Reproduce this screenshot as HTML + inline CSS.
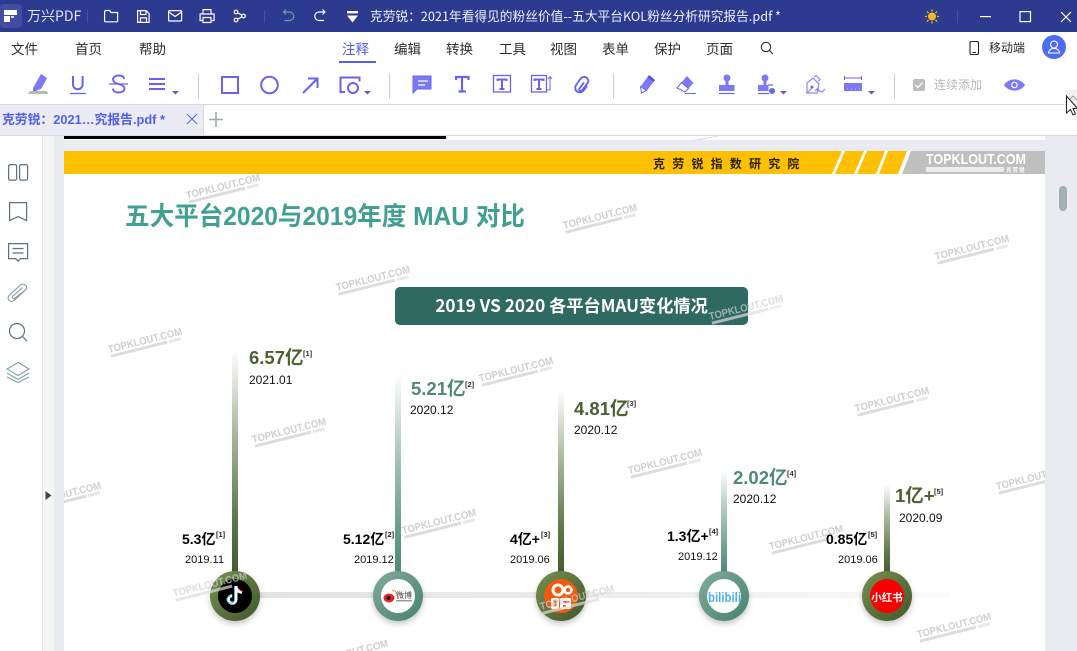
<!DOCTYPE html>
<html lang="zh"><head><meta charset="utf-8"><title>万兴PDF</title>
<style>
html,body{margin:0;padding:0;width:1077px;height:651px;overflow:hidden;background:#fff}
svg{display:block}
text{font-family:"Liberation Sans","Noto Sans CJK SC",sans-serif}
.cj{font-family:"Noto Sans CJK SC","Liberation Sans",sans-serif}
.m{font-size:13.5px;fill:#2b2b2b}
.w{font-size:10.5px;font-weight:700;fill:#cfcfcf}
.b{font-size:18.500px;font-weight:700}
.l{font-size:14px;font-weight:700;fill:#000}
.s{font-size:7.500px;font-weight:700}
.d{font-size:12px;fill:#111}
.e{font-size:11px;fill:#111}
.i{fill:none;stroke:#6a63ee;stroke-width:2}
.f{fill:#7d78f5}
.n{fill:none;stroke:#fff;stroke-width:1.2}
.p{fill:none;stroke:#5b7088;stroke-width:1.2}
</style></head><body>
<svg width="1077" height="651" viewBox="0 0 1077 651" xmlns="http://www.w3.org/2000/svg">
<defs>
<linearGradient id="g1" x1="0" y1="0" x2="0" y2="1"><stop offset="0" stop-color="#fff"/><stop offset=".35" stop-color="#aebba3"/><stop offset=".75" stop-color="#5d7748"/><stop offset="1" stop-color="#445a2c"/></linearGradient>
<linearGradient id="g2" x1="0" y1="0" x2="0" y2="1"><stop offset="0" stop-color="#fff"/><stop offset=".35" stop-color="#b3cdc3"/><stop offset=".75" stop-color="#6a9e8b"/><stop offset="1" stop-color="#4d8a74"/></linearGradient>
<linearGradient id="r1" x1="0" y1="0" x2="1" y2="1"><stop offset="0" stop-color="#759150"/><stop offset="1" stop-color="#43562b"/></linearGradient>
<linearGradient id="r2" x1="0" y1="0" x2="1" y2="1"><stop offset="0" stop-color="#82ab9b"/><stop offset="1" stop-color="#478270"/></linearGradient>
<linearGradient id="tl" x1="0" y1="0" x2="1" y2="0"><stop offset="0" stop-color="#e2e2e2"/><stop offset=".6" stop-color="#eeeeee"/><stop offset="1" stop-color="#fbfbfb"/></linearGradient>
<filter id="sh" x="-30%" y="-30%" width="160%" height="170%"><feDropShadow dx="0" dy="3" stdDeviation="3" flood-color="#000" flood-opacity=".22"/></filter>
<clipPath id="pg"><rect x="64" y="151" width="981" height="500"/></clipPath>
</defs>

<!-- backgrounds -->
<rect x="54" y="136" width="1023" height="515" fill="#e9ebf1"/>
<rect x="0" y="136" width="42" height="515" fill="#fff"/>
<rect x="42" y="136" width="1" height="515" fill="#dfe2e4"/>
<rect x="43" y="136" width="11" height="515" fill="#f4f6f6"/>
<rect x="64" y="136" width="981" height="4" fill="#fff"/>
<rect x="64" y="136" width="382" height="3" fill="#000"/>
<polygon points="692,140 716,136 720,136 700,140" fill="#ddd"/>
<rect x="64" y="151" width="981" height="500" fill="#fff"/>

<!-- title bar -->
<rect width="1077" height="32" fill="#2c3a8f"/>
<rect x="0" y="4" width="22" height="24" rx="4" fill="#404da0"/>
<rect x="4" y="10" width="13" height="5" fill="#fff"/><rect x="4" y="16" width="6" height="6" fill="#fff"/><rect x="11" y="16" width="3" height="2" fill="#d7daf0"/>
<text x="27" y="21" class="cj" font-size="14" fill="#dfe3f5">万兴PDF</text>
<rect x="87" y="10" width="1" height="13" fill="#45529f"/>
<path class="n" d="M104.600 12c0-1 .5-1.500 1.500-1.500h3.500l1.500 2h6.500v8.500a.8.8 0 0 1-.8.8h-11.400a.8.8 0 0 1-.8-.8z"/>
<path class="n" d="M137.600 10.600h8.500l3 3v8.800h-11.500zM140.500 10.600v3.900h5.500v-3.900M140.500 22.400v-4.500h6v4.500"/>
<rect class="n" x="168.600" y="10.600" width="13" height="10.400" rx="1"/><path class="n" d="M168.800 12l6.300 4.500 6.300-4.500"/>
<path class="n" d="M203 14v-4.400h8V14M202.500 20.500h-2.400v-6.500h14v6.500h-2.400"/><rect class="n" x="203" y="17.500" width="8" height="5"/>
<circle class="n" cx="236" cy="12" r="1.800"/><circle class="n" cx="236" cy="20" r="1.800"/><circle class="n" cx="243.500" cy="16" r="1.800"/>
<path class="n" d="M237.700 12.900l4.200 2.300M237.700 19.100l4.200-2.300"/>
<rect x="264" y="10" width="1" height="13" fill="#45529f"/>
<path fill="none" stroke="#6aa3a8" stroke-width="1.200" d="M286 9.500l-2.500 2.500 2.500 2.500M283.500 12h6a4.200 4.200 0 0 1 0 8.500h-5"/>
<path class="n" d="M322.500 9.500l2.500 2.500-2.500 2.500M325 12h-6a4.200 4.200 0 0 0 0 8.500h5"/>
<rect x="347" y="11" width="11" height="2.400" fill="#fff"/><path d="M347 15.500h11l-5.500 7z" fill="#fff"/>
<text x="370" y="21" class="cj" font-size="13" fill="#eef0fa" textLength="411" lengthAdjust="spacingAndGlyphs">克劳锐：2021年看得见的粉丝价值--五大平台KOL粉丝分析研究报告.pdf *</text>
<circle cx="932" cy="16.500" r="4" fill="#f6b81f"/>
<path stroke="#f6b81f" stroke-width="1.300" d="M932 9.500v2M932 21.500v2M925 16.500h2M937 16.500h2M927 11.500l1.500 1.500M935.500 20l1.500 1.500M937 11.500l-1.500 1.500M928.500 20l-1.500 1.500"/>
<rect x="957" y="10" width="1" height="13" fill="#45529f"/>
<rect x="980" y="16" width="11" height="1.200" fill="#fff"/>
<rect class="n" x="1020" y="11.600" width="10.500" height="10"/>
<path class="n" d="M1061 12l10 10M1071 12l-10 10"/>

<!-- menu -->
<text x="11" y="54" class="m">文件</text>
<text x="75" y="54" class="m">首页</text>
<text x="139" y="54" class="m">帮助</text>
<text x="342" y="54" class="m" style="fill:#4f5ff0">注释</text>
<rect x="339" y="61" width="37" height="2" fill="#5160ee"/>
<text x="394" y="54" class="m">编辑</text>
<text x="446" y="54" class="m">转换</text>
<text x="499" y="54" class="m">工具</text>
<text x="550" y="54" class="m">视图</text>
<text x="602" y="54" class="m">表单</text>
<text x="654" y="54" class="m">保护</text>
<text x="706" y="54" class="m">页面</text>
<circle cx="766" cy="47" r="4.700" fill="none" stroke="#333" stroke-width="1.100"/><path d="M769.500 50.500l3.500 3.500" stroke="#333" stroke-width="1.100"/>
<rect x="970" y="41.500" width="8.500" height="13" rx="1.500" fill="none" stroke="#222" stroke-width="1.100"/><path d="M972.500 52.500h3.500" stroke="#222"/>
<text x="989" y="52" font-size="12" fill="#2b2b2b">移动端</text>
<circle cx="1054" cy="47" r="12" fill="#4d6cf6"/>
<circle cx="1054" cy="44.500" r="3.500" fill="none" stroke="#fff" stroke-width="1.100"/>
<path d="M1048.500 53c.5-3.500 2.500-4.500 5.500-4.500s5 1 5.500 4.500z" fill="none" stroke="#fff" stroke-width="1.100"/>

<!-- toolbar -->
<path class="f" d="M41 74l6 4-5.500 10.500-5.500 2.500-3-3z"/><path d="M33 88l3.500 3-3 0z" fill="#5a53e0"/>
<path d="M30 91h17l1 3H28z" fill="#b4bcb0"/>
<path class="i" d="M73 76v8.500a4.800 4.800 0 0 0 9.600 0v-8.500"/><path d="M70 93.500h16" stroke="#6a63ee" stroke-width="1.300"/>
<path class="i" style="stroke-width:1.900" d="M124 79c0-2.500-2.500-3.500-5.500-3.500-3.500 0-5.500 2-5.500 4 0 2 2 3.500 5.500 4.500 3.500 1 6 2.500 6 4.500 0 2.500-2.500 4-6 4-3.500 0-5.500-1.500-5.500-4"/><path d="M109 84h19" stroke="#6a63ee" stroke-width="1.300"/>
<path d="M149 79h16M149 84h16M149 89h16" stroke="#6a63ee" stroke-width="2"/>
<path d="M172 91h7l-3.500 3.500z" fill="#5a5fb5"/>
<rect x="198" y="74" width="1" height="25" fill="#ccd0d6"/>
<rect class="i" x="222" y="77" width="16" height="16"/>
<circle class="i" cx="269.500" cy="85" r="8.300"/>
<path class="i" d="M303 93l14-14M308 78.500h9.500V88"/>
<path class="i" d="M345 92h-4.500v-14.500h19v4"/><circle class="i" cx="353" cy="88" r="5"/>
<path d="M364 91h7l-3.500 3.500z" fill="#5a5fb5"/>
<rect x="389" y="74" width="1" height="25" fill="#ccd0d6"/>
<path class="f" d="M413 76h18v13h-14l-4 4z"/><path d="M413 76h18v13h-14l-4 4z" fill="none" stroke="#6a63ee"/>
<path d="M418 81h10M418 85h7" stroke="#fff" stroke-width="1.200"/>
<path class="i" d="M456 80v-3h12.500v3M462 77v14M458.500 91.500h7.500" style="stroke-width:2.200"/>
<rect x="493.500" y="75.500" width="17" height="16.500" fill="none" stroke="#6a63ee" stroke-width="1.300"/>
<path class="i" d="M497.500 81v-1.500h9V81M502 79.500v9.500M499.500 89h5" style="stroke-width:2"/>
<rect x="531.500" y="75.500" width="15" height="16.500" fill="none" stroke="#6a63ee" stroke-width="1.300"/>
<path class="i" d="M534.500 81v-1.500h9V81M539 79.500v9.500M536.500 89h5" style="stroke-width:2"/>
<path d="M547 90h3v-13M548 79l2-2.500 2 2.500" fill="none" stroke="#6a63ee" stroke-width="1"/>
<path class="i" d="M586 81l-7 9c-1.800 2.300 1.500 3.800 3 2l6-8c2-3-.5-8-4-8.500-1.500-.2-3 .8-4 2l-2 2" style="display:none"/>
<path class="i" style="stroke-width:1.900" d="M584 82.500l-4.500 6c-1.300 2 1.300 3.500 2.800 1.600l5-6.600c2.500-3.500-.8-7.500-4.300-6.500-1 .3-2 1-3 2.500l-3.500 5c-2.500 3.500-1 6.500 1.500 7.500 2 .8 4 .2 5.500-1.500l3.500-4.500"/>
<rect x="613" y="74" width="1" height="25" fill="#ccd0d6"/>
<path class="f" d="M649 75l6 5-8 10.500-6-4.500z"/><path d="M649 75l6 5-1.500 2-6-4.500z" fill="#5a53e0"/>
<path d="M640.500 86.500l6 4-5 2.500z" fill="#fff" stroke="#6a63ee"/>
<path class="f" d="M687 76l6.500 7-5 5.500-7-6z"/><path d="M681.500 82.500l7 6-3.500 3.500-8-4z" fill="#fff" stroke="#6a63ee"/>
<path d="M685 93.500h11" stroke="#6a63ee"/>
<circle cx="727" cy="78" r="3.500" class="f"/><rect x="725.500" y="80" width="3" height="5" class="f"/>
<rect x="719" y="85" width="15.500" height="6" class="f"/><path d="M719 93.500h15.500" stroke="#6a63ee" stroke-width="1.200"/>
<circle cx="765" cy="78" r="3.500" class="f"/><rect x="763.500" y="80" width="3" height="5" class="f"/>
<rect x="758" y="85" width="10.500" height="6" class="f"/><path d="M768 85h5M758 93.500h11" stroke="#6a63ee" stroke-width="1.200"/>
<circle cx="772" cy="91" r="3" fill="#5d6ef0"/>
<path d="M780 91h7l-3.500 3.500z" fill="#5a5fb5"/>
<path fill="none" stroke="#8c88f2" stroke-width="1.200" d="M807 83l6-5 6 6-2 9h-10zM814 77l2-1.500 4 4-1.500 2M807 93l5-5M815 91l3-3 1 3 3 1 3-3"/><circle cx="812" cy="87" r="1.500" fill="#6a63ee"/>
<path d="M844.500 76v4M861.500 76v4M844.500 78h17" stroke="#6a63ee" fill="none"/>
<rect x="844" y="83" width="18" height="8" class="f"/><path d="M847 89h1M851 89h1M855 89h1M859 89h1" stroke="#fff" stroke-opacity=".6"/>
<path d="M868 91h7l-3.500 3.500z" fill="#5a5fb5"/>
<rect x="894" y="74" width="1" height="25" fill="#ccd0d6"/>
<rect x="913" y="79" width="12" height="12" rx="2" fill="#bdbdbd"/><path d="M915.500 85l2.500 2.500 4.500-5" fill="none" stroke="#fff" stroke-width="1.300"/>
<text x="934" y="89" font-size="12" fill="#b7b7b7">连续添加</text>
<path d="M1004 85c5-7.500 16-7.500 21 0-5 7.500-16 7.500-21 0z" fill="#7d78f5"/><circle cx="1014.500" cy="85" r="2.700" fill="none" stroke="#fff" stroke-width="1.200"/>

<!-- tab bar -->
<rect x="1065" y="90" width="12" height="14" fill="#f0f2f2"/>
<path d="M1069 100l4-4 4 4" fill="none" stroke="#8fa8a0" stroke-width="1"/>
<rect x="0" y="104" width="1077" height="1" fill="#d6d6e6"/>
<rect x="0" y="105" width="203" height="30" fill="#ebecf3"/>
<rect x="203" y="105" width="1" height="30" fill="#d6d6e6"/>
<rect x="0" y="135" width="1077" height="1" fill="#d9dae0"/>
<text x="2" y="124" font-size="13" font-weight="700" fill="#4f5ff0" textLength="163" lengthAdjust="spacingAndGlyphs">克劳锐：2021…究报告.pdf *</text>
<path d="M187 114l10 10M197 114l-10 10" stroke="#5a66e8" stroke-width="1" fill="none"/>
<path d="M216 112v15M209 119.500h14" stroke="#9aa9a8" stroke-width="1.600"/>
<path d="M1066.500 96v17l4-3.500 2.500 5.500 2.500-1-2.500-5.500h4.500z" fill="#fff" stroke="#222" stroke-width="1"/>

<!-- sidebar -->
<rect class="p" x="8.600" y="164.600" width="8" height="15.500" rx="1.500"/>
<rect class="p" x="19.600" y="164.600" width="8" height="15.500" rx="1.500"/>
<path class="p" d="M9.600 202.600h17v18l-8.500-4-8.500 4z"/>
<path class="p" d="M8.600 243.600h19v15h-7l-2.500 2.500-2.500-2.500h-7zM12.500 248.500h11M12.500 253h11"/>
<path fill="none" stroke="#7d9aa0" stroke-width="1.100" d="M26 289.500L14 300.500c-3 3-8-1-5-5l11.500-10.500c3-2.500 8 1 5.500 4.500L15 298c-1.500 1.500-3.500-.5-2-2l9.500-8.500"/>
<circle class="p" cx="17" cy="331" r="7.500"/><path d="M22.500 336.500l4.500 4.500" stroke="#5b7088" stroke-width="1.200"/>
<path fill="none" stroke="#7fa2a3" stroke-width="1.100" d="M18 362.500l11 6.500-11 6.500-11-6.500zM7 373l11 6.500L29 373M7 377l11 5.500L29 377"/>
<path d="M45.500 491l6 4.500-6 4.500z" fill="#444"/>
<rect x="1059" y="186" width="8" height="25" rx="4" fill="#a1b0b0"/>

<!-- banner -->
<rect x="64" y="151" width="981" height="23" fill="#fec000"/>
<polygon points="902,174 911,151 1045,151 1045,174" fill="#bfbfbf"/>
<g fill="#fff">
<polygon points="832,174 842,151 845,151 835,174"/>
<polygon points="854,174 864,151 867,151 857,174"/>
<polygon points="876,174 885,151 888,151 879,174"/>
<polygon points="898,174 907,151 911,151 902,174"/>
</g>
<text x="653" y="168" font-size="12" font-weight="700" fill="#2a2206" class="cj" letter-spacing="7.200">克劳锐指数研究院</text>
<text x="926" y="164" font-size="15" font-weight="700" fill="#fff" textLength="100" lengthAdjust="spacingAndGlyphs">TOPKLOUT.COM</text>
<rect x="926" y="167" width="78" height="5" fill="#fff" opacity=".7"/>
<text x="1006" y="172" font-size="5.500" font-weight="700" fill="#fff" letter-spacing="1">克劳锐</text>

<!-- title -->
<text x="125" y="225" font-size="25.500" font-weight="700" fill="#42a093" textLength="400" lengthAdjust="spacingAndGlyphs">五大平台2020与2019年度 MAU 对比</text>

<!-- heading button -->
<rect x="395" y="287" width="353" height="38" rx="5" fill="#2f6a62"/>
<text x="571.500" y="312" text-anchor="middle" class="cj" font-size="17.200" font-weight="700" fill="#fff">2019 VS 2020 各平台MAU变化情况</text>

<!-- watermarks -->
<g clip-path="url(#pg)">
<g transform="translate(187 199) rotate(-14)"><text class="w" textLength="76" lengthAdjust="spacingAndGlyphs">TOPKLOUT.COM</text><rect x="1" y="2" width="58" height="3" fill="#ddd"/><rect x="61" y="2" width="12" height="3" fill="#e8e8e8"/></g>
<g transform="translate(564 229) rotate(-14)"><text class="w" textLength="76" lengthAdjust="spacingAndGlyphs">TOPKLOUT.COM</text><rect x="1" y="2" width="58" height="3" fill="#ddd"/><rect x="61" y="2" width="12" height="3" fill="#e8e8e8"/></g>
<g transform="translate(936 260) rotate(-14)"><text class="w" textLength="76" lengthAdjust="spacingAndGlyphs">TOPKLOUT.COM</text><rect x="1" y="2" width="58" height="3" fill="#ddd"/><rect x="61" y="2" width="12" height="3" fill="#e8e8e8"/></g>
<g transform="translate(337 291) rotate(-14)"><text class="w" textLength="76" lengthAdjust="spacingAndGlyphs">TOPKLOUT.COM</text><rect x="1" y="2" width="58" height="3" fill="#ddd"/><rect x="61" y="2" width="12" height="3" fill="#e8e8e8"/></g>
<g transform="translate(710 320) rotate(-14)" opacity=".7"><text class="w" textLength="76" lengthAdjust="spacingAndGlyphs">TOPKLOUT.COM</text><rect x="1" y="2" width="58" height="3" fill="#ddd"/><rect x="61" y="2" width="12" height="3" fill="#e8e8e8"/></g>
<g transform="translate(109 353) rotate(-14)"><text class="w" textLength="76" lengthAdjust="spacingAndGlyphs">TOPKLOUT.COM</text><rect x="1" y="2" width="58" height="3" fill="#ddd"/><rect x="61" y="2" width="12" height="3" fill="#e8e8e8"/></g>
<g transform="translate(480 382) rotate(-14)"><text class="w" textLength="76" lengthAdjust="spacingAndGlyphs">TOPKLOUT.COM</text><rect x="1" y="2" width="58" height="3" fill="#ddd"/><rect x="61" y="2" width="12" height="3" fill="#e8e8e8"/></g>
<g transform="translate(856 412) rotate(-14)"><text class="w" textLength="76" lengthAdjust="spacingAndGlyphs">TOPKLOUT.COM</text><rect x="1" y="2" width="58" height="3" fill="#ddd"/><rect x="61" y="2" width="12" height="3" fill="#e8e8e8"/></g>
<g transform="translate(253 443) rotate(-14)"><text class="w" textLength="76" lengthAdjust="spacingAndGlyphs">TOPKLOUT.COM</text><rect x="1" y="2" width="58" height="3" fill="#ddd"/><rect x="61" y="2" width="12" height="3" fill="#e8e8e8"/></g>
<g transform="translate(629 474) rotate(-14)"><text class="w" textLength="76" lengthAdjust="spacingAndGlyphs">TOPKLOUT.COM</text><rect x="1" y="2" width="58" height="3" fill="#ddd"/><rect x="61" y="2" width="12" height="3" fill="#e8e8e8"/></g>
<g transform="translate(997 490) rotate(-14)"><text class="w" textLength="76" lengthAdjust="spacingAndGlyphs">TOPKLOUT.COM</text><rect x="1" y="2" width="58" height="3" fill="#ddd"/><rect x="61" y="2" width="12" height="3" fill="#e8e8e8"/></g>
<g transform="translate(403 534) rotate(-14)"><text class="w" textLength="76" lengthAdjust="spacingAndGlyphs">TOPKLOUT.COM</text><rect x="1" y="2" width="58" height="3" fill="#ddd"/><rect x="61" y="2" width="12" height="3" fill="#e8e8e8"/></g>
<g transform="translate(770 550) rotate(-14)"><text class="w" textLength="76" lengthAdjust="spacingAndGlyphs">TOPKLOUT.COM</text><rect x="1" y="2" width="58" height="3" fill="#ddd"/><rect x="61" y="2" width="12" height="3" fill="#e8e8e8"/></g>
<g transform="translate(28 507) rotate(-14)"><text class="w" textLength="76" lengthAdjust="spacingAndGlyphs">TOPKLOUT.COM</text><rect x="1" y="2" width="58" height="3" fill="#ddd"/><rect x="61" y="2" width="12" height="3" fill="#e8e8e8"/></g>
<g transform="translate(918 638) rotate(-14)"><text class="w" textLength="76" lengthAdjust="spacingAndGlyphs">TOPKLOUT.COM</text><rect x="1" y="2" width="58" height="3" fill="#ddd"/><rect x="61" y="2" width="12" height="3" fill="#e8e8e8"/></g>
<g transform="translate(315 665) rotate(-14)"><text class="w" textLength="76" lengthAdjust="spacingAndGlyphs">TOPKLOUT.COM</text></g>
</g>

<!-- timeline -->
<rect x="235" y="592" width="715" height="6" fill="url(#tl)"/>

<!-- bars -->
<rect x="232" y="350" width="6" height="226" fill="url(#g1)"/>
<rect x="395" y="373" width="6" height="203" fill="url(#g2)"/>
<rect x="558" y="391" width="6" height="185" fill="url(#g1)"/>
<rect x="721" y="470" width="6" height="106" fill="url(#g2)"/>
<rect x="884" y="484" width="6" height="92" fill="url(#g1)"/>

<!-- circles -->
<circle cx="235" cy="596" r="25" fill="url(#r1)" filter="url(#sh)"/>
<circle cx="235" cy="596" r="17" fill="#000"/>
<path d="M236 586v13.500a3.800 3.800 0 1 1-3.800-3.800" fill="none" stroke="#fff" stroke-width="3"/>
<path d="M236 587c.5 3 2.500 5 6 5.500" fill="none" stroke="#fff" stroke-width="3"/>
<path d="M234.500 586v13.500a3.800 3.800 0 1 1-3.800-3.800" fill="none" stroke="#31c9d8" stroke-width="1"/>
<path d="M238 587.500c.8 2 2.500 3.500 5 4" fill="none" stroke="#ee2a50" stroke-width="1"/>

<circle cx="398" cy="596" r="25" fill="url(#r2)" filter="url(#sh)"/>
<circle cx="398" cy="596" r="17" fill="#fff"/>
<ellipse cx="389" cy="598" rx="5.500" ry="4.500" fill="#e0262b"/><circle cx="388.500" cy="598" r="2" fill="#222"/>
<path d="M392 591c2-1 4.500 0 4 3" fill="none" stroke="#e8941d" stroke-width="1"/>
<text x="396" y="598" class="cj" font-size="8" fill="#444">微博</text>
<rect x="396" y="600" width="16" height="1.500" fill="#999"/>

<circle cx="561" cy="596" r="25" fill="url(#r1)" filter="url(#sh)"/>
<circle cx="561" cy="596" r="17" fill="#f25a0f"/>
<circle cx="558" cy="590" r="5" fill="none" stroke="#fff" stroke-width="3"/>
<circle cx="568" cy="590" r="3.500" fill="none" stroke="#fff" stroke-width="2.600"/>
<rect x="551" y="598" width="8" height="11" rx="2" fill="#fff"/><rect x="553.500" y="600.500" width="3" height="6" fill="#f25a0f"/>
<rect x="560" y="598" width="11" height="11" rx="2" fill="#fff"/><rect x="563" y="601" width="6" height="2" fill="#f25a0f"/><rect x="563" y="605" width="3" height="2" fill="#f25a0f"/>

<circle cx="724" cy="596" r="25" fill="url(#r2)" filter="url(#sh)"/>
<circle cx="724" cy="596" r="17" fill="#fff"/>
<text x="708" y="602" font-size="13.500" font-weight="700" fill="#4db0e8" textLength="33" lengthAdjust="spacingAndGlyphs">bilibili</text>

<circle cx="887" cy="596" r="25" fill="url(#r1)" filter="url(#sh)"/>
<circle cx="887" cy="596" r="17" fill="#fb0000"/>
<text x="887" y="601" text-anchor="middle" class="cj" font-size="10.500" font-weight="700" fill="#fff">小红书</text>

<!-- watermarks over the circles -->
<g transform="translate(174 597) rotate(-14)" opacity=".7"><text class="w" textLength="76" lengthAdjust="spacingAndGlyphs">TOPKLOUT.COM</text><rect x="1" y="2" width="58" height="3" fill="#ddd"/></g>
<g transform="translate(541 610) rotate(-14)" opacity=".7"><text class="w" textLength="76" lengthAdjust="spacingAndGlyphs">TOPKLOUT.COM</text><rect x="1" y="2" width="58" height="3" fill="#ddd"/></g>

<!-- values 2020 -->
<text x="249" y="364" class="b" fill="#4a6132">6.57亿</text><text x="303" y="356" class="s" fill="#333">[1]</text>
<text x="249" y="384" class="d">2021.01</text>
<text x="411" y="395" class="b" fill="#4e8a74">5.21亿</text><text x="465" y="387" class="s" fill="#333">[2]</text>
<text x="410" y="414" class="d">2020.12</text>
<text x="574" y="415" class="b" fill="#4a6132">4.81亿</text><text x="627" y="406" class="s" fill="#333">[3]</text>
<text x="574" y="434" class="d">2020.12</text>
<text x="733" y="484" class="b" fill="#4e8a74">2.02亿</text><text x="787" y="476" class="s" fill="#333">[4]</text>
<text x="733" y="503" class="d">2020.12</text>
<text x="895" y="502" class="b" fill="#4a6132">1亿+</text><text x="934" y="494" class="s" fill="#333">[5]</text>
<text x="899" y="522" class="d">2020.09</text>

<!-- values 2019 -->
<text x="182" y="544" class="l">5.3亿</text><text x="216" y="537" class="s" fill="#222">[1]</text>
<text x="185" y="563" class="e">2019.11</text>
<text x="343" y="544" class="l">5.12亿</text><text x="385" y="537" class="s" fill="#222">[2]</text>
<text x="354" y="563" class="e">2019.12</text>
<text x="510" y="544" class="l">4亿+</text><text x="541" y="537" class="s" fill="#222">[3]</text>
<text x="510" y="563" class="e">2019.06</text>
<text x="667" y="541" class="l">1.3亿+</text><text x="709" y="534" class="s" fill="#222">[4]</text>
<text x="678" y="560" class="e">2019.12</text>
<text x="826" y="544" class="l">0.85亿</text><text x="868" y="537" class="s" fill="#222">[5]</text>
<text x="838" y="563" class="e">2019.06</text>
</svg>
</body></html>
